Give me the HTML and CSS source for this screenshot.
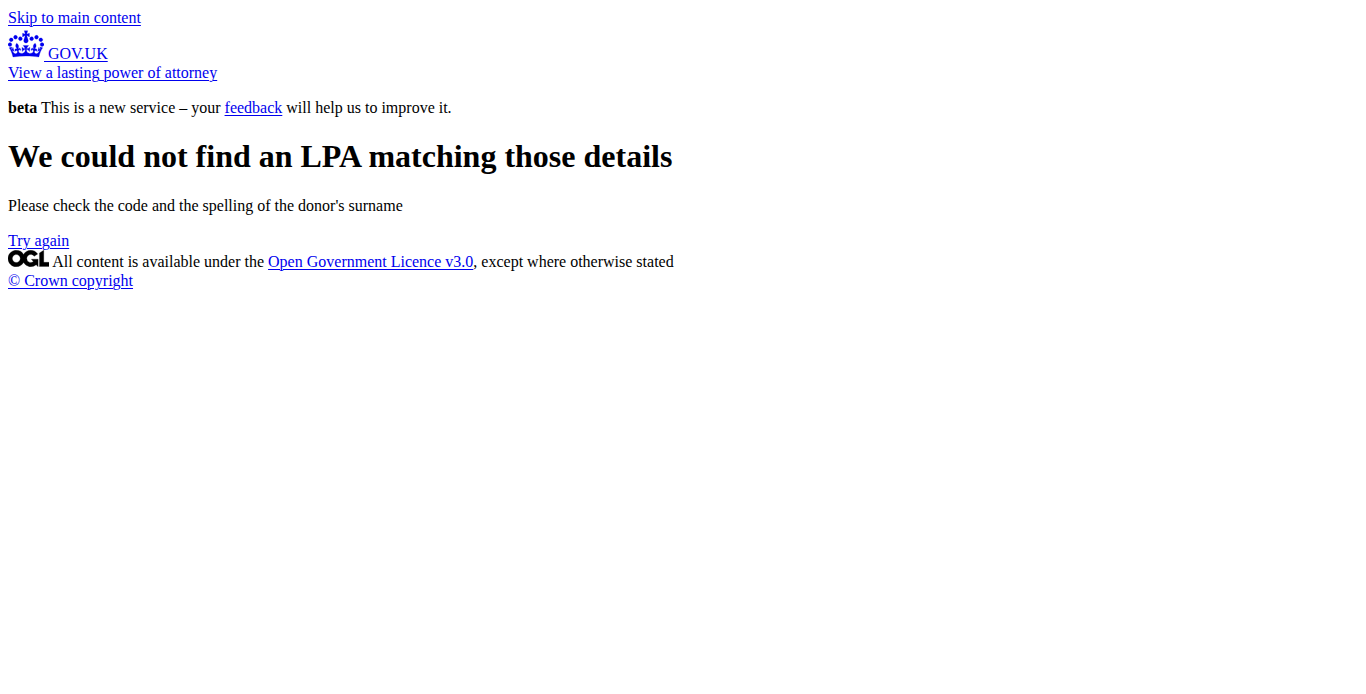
FILE: index.html
```html
<!DOCTYPE html>
<html lang="en">
<head>
<meta charset="utf-8">
<title>We could not find an LPA matching those details</title>
<link rel="stylesheet" href="styles.css">
</head>
<body>
<a href="#main-content" class="skip-link">Skip to main content</a>
<header class="header">
<div class="header-logo">
<a href="#" class="header-link">
<svg class="crown" aria-hidden="true" focusable="false" viewBox="0 0 132 97" height="30" width="36"><path fill="currentColor" stroke="currentColor" stroke-width="1" fill-rule="evenodd" d="M25 30.2c3.5 1.5 7.7-.2 9.1-3.7 1.5-3.6-.2-7.8-3.9-9.2-3.6-1.4-7.6.3-9.1 3.9-1.4 3.5.3 7.5 3.9 9zM9 39.5c3.6 1.5 7.8-.2 9.2-3.7 1.5-3.6-.2-7.8-3.9-9.1-3.6-1.5-7.6.2-9.1 3.8-1.4 3.5.3 7.5 3.8 9zM4.4 57.2c3.5 1.5 7.7-.2 9.1-3.8 1.5-3.6-.2-7.7-3.9-9.1-3.5-1.5-7.6.3-9.1 3.8-1.4 3.5.3 7.6 3.9 9.1zm38.3-21.4c3.5 1.5 7.7-.2 9.1-3.8 1.5-3.6-.2-7.7-3.9-9.1-3.6-1.5-7.6.3-9.1 3.8-1.3 3.6.4 7.7 3.9 9.1zm64.4-5.6c-3.6 1.5-7.8-.2-9.1-3.7-1.5-3.6.2-7.8 3.8-9.2 3.6-1.4 7.7.3 9.2 3.9 1.3 3.5-.4 7.5-3.9 9zm15.9 9.3c-3.6 1.5-7.7-.2-9.1-3.7-1.5-3.6.2-7.8 3.7-9.1 3.6-1.5 7.7.2 9.2 3.8 1.5 3.5-.3 7.5-3.8 9zm4.7 17.7c-3.6 1.5-7.8-.2-9.2-3.8-1.5-3.6.2-7.7 3.9-9.1 3.6-1.5 7.7.3 9.2 3.8 1.3 3.5-.4 7.6-3.9 9.1zM89.3 35.8c-3.6 1.5-7.8-.2-9.2-3.8-1.4-3.6.2-7.7 3.9-9.1 3.6-1.5 7.7.3 9.2 3.8 1.4 3.6-.3 7.7-3.9 9.1zM69.7 17.7l8.9 4.7V9.3l-8.9 2.8c-.2-.3-.5-.6-.9-.9L72.4 0H59.6l3.5 11.2c-.3.3-.6.5-.9.9l-8.8-2.8v13.1l8.8-4.7c.3.3.6.7.9.9l-5 15.4v.1c-.2.8-.4 1.6-.4 2.4 0 4.1 3.1 7.5 7 8.1h.2c.3 0 .7.1 1 .1.4 0 .7 0 1-.1h.2c4-.6 7.1-4.1 7.1-8.1 0-.8-.1-1.7-.4-2.4V34l-5.1-15.4c.4-.2.7-.6 1-.9zM66 92.8c16.9 0 32.8 1.1 47.1 3.2 4-16.9 8.9-26.7 14-33.5l-9.6-3.4c1 4.9 1.1 7.2 0 10.2-1.5-1.4-3-4.3-4.2-8.7L108.6 76c2.8-2 5-3.2 7.5-3.3-4.4 9.4-10 11.9-13.6 11.2-4.3-.8-6.3-4.6-5.6-7.9 1-4.7 5.7-5.9 8-.5 4.3-8.7-3-11.4-7.6-8.8 7.1-7.2 7.9-13.5 2.1-21.1-8 6.1-8.1 12.3-4.5 20.8-4.7-5.4-12.1-2.5-9.5 6.2 3.4-5.2 7.9-2 7.2 3.1-.6 4.3-6.4 7.8-13.5 7.2-10.3-.9-10.9-8-11.2-13.8 2.5-.5 7.1 1.8 11 7.3L80.2 60c-4.1 4.4-8 5.3-12.3 5.4 1.4-4.4 8-11.6 8-11.6H55.5s6.4 7.2 7.9 11.6c-4.2-.1-8-1-12.3-5.4l1.4 16.4c3.9-5.5 8.5-7.7 10.9-7.3-.3 5.8-.9 12.8-11.1 13.8-7.2.6-12.9-2.9-13.5-7.2-.7-5 3.8-8.3 7.1-3.1 2.7-8.7-4.6-11.6-9.4-6.2 3.7-8.5 3.6-14.7-4.6-20.8-5.8 7.6-5 13.9 2.2 21.1-4.7-2.6-11.9.1-7.7 8.8 2.3-5.5 7.1-4.2 8.1.5.7 3.3-1.3 7.1-5.7 7.9-3.5.7-9-1.8-13.5-11.2 2.5.1 4.7 1.3 7.5 3.3l-4.7-15.4c-1.2 4.4-2.7 7.2-4.3 8.7-1.1-3-.9-5.3 0-10.2l-9.5 3.4c5 6.9 9.9 16.7 14 33.5 14.8-2.1 30.8-3.2 47.7-3.2z"/></svg>
<span>GOV.UK</span></a>
</div>
<div class="header-content"><a href="#">View a lasting power of attorney</a></div>
</header>
<p class="phase-banner"><strong>beta</strong> <span>This is a new service – your <a href="#">feedback</a> will help us to improve it.</span></p>
<main id="main-content">
<h1 class="heading">We could not find an LPA matching those details</h1>
<p class="body-text">Please check the code and the spelling of the donor's surname</p>
<a href="#">Try again</a>
</main>
<footer class="footer">
<div>
<svg class="ogl" aria-hidden="true" focusable="false" viewBox="0 0 483.2 195.7" height="17" width="41"><path fill="currentColor" stroke="currentColor" stroke-width="3" d="M421.5 142.8V.1l-50.7 32.3v161.1h112.4v-50.7zm-122.3-9.6A47.12 47.12 0 0 1 221 97.8c0-26 21.1-47.1 47.1-47.1 16.7 0 31.4 8.7 39.7 21.8l42.7-27.2A97.63 97.63 0 0 0 268.1 0c-36.5 0-68.3 20.1-85.1 49.7A98 98 0 0 0 97.8 0C43.9 0 0 43.9 0 97.8s43.9 97.8 97.8 97.8c36.5 0 68.3-20.1 85.1-49.7a97.76 97.76 0 0 0 149.6 25.4l19.4 22.2h3v-87.8h-80l24.3 27.5zM97.8 145c-26 0-47.1-21.1-47.1-47.1s21.1-47.1 47.1-47.1 47.1 21.1 47.1 47.1S123.8 145 97.8 145"/></svg>
<span>All content is available under the <a href="#">Open Government Licence v3.0</a>, except where otherwise stated</span>
</div>
<div><a href="#">© Crown copyright</a></div>
</footer>
</body>
</html>
```
FILE: styles.css
```css
body {
  margin: 8px;
  background: #fff;
  color: #000;
  font-family: "Liberation Serif", "Times New Roman", serif;
  font-size: 16px;
  line-height: 19px;
}

a {
  color: #0000ee;
  text-decoration: underline;
  text-decoration-thickness: 1px;
  text-underline-offset: 2px;
}

.header-logo {
  padding-top: 2px;
}

.phase-banner,
.body-text {
  margin: 16px 0;
}

.heading {
  margin: 20px 0 21px;
  font-size: 32px;
  font-weight: bold;
  line-height: 38px;
}
```
